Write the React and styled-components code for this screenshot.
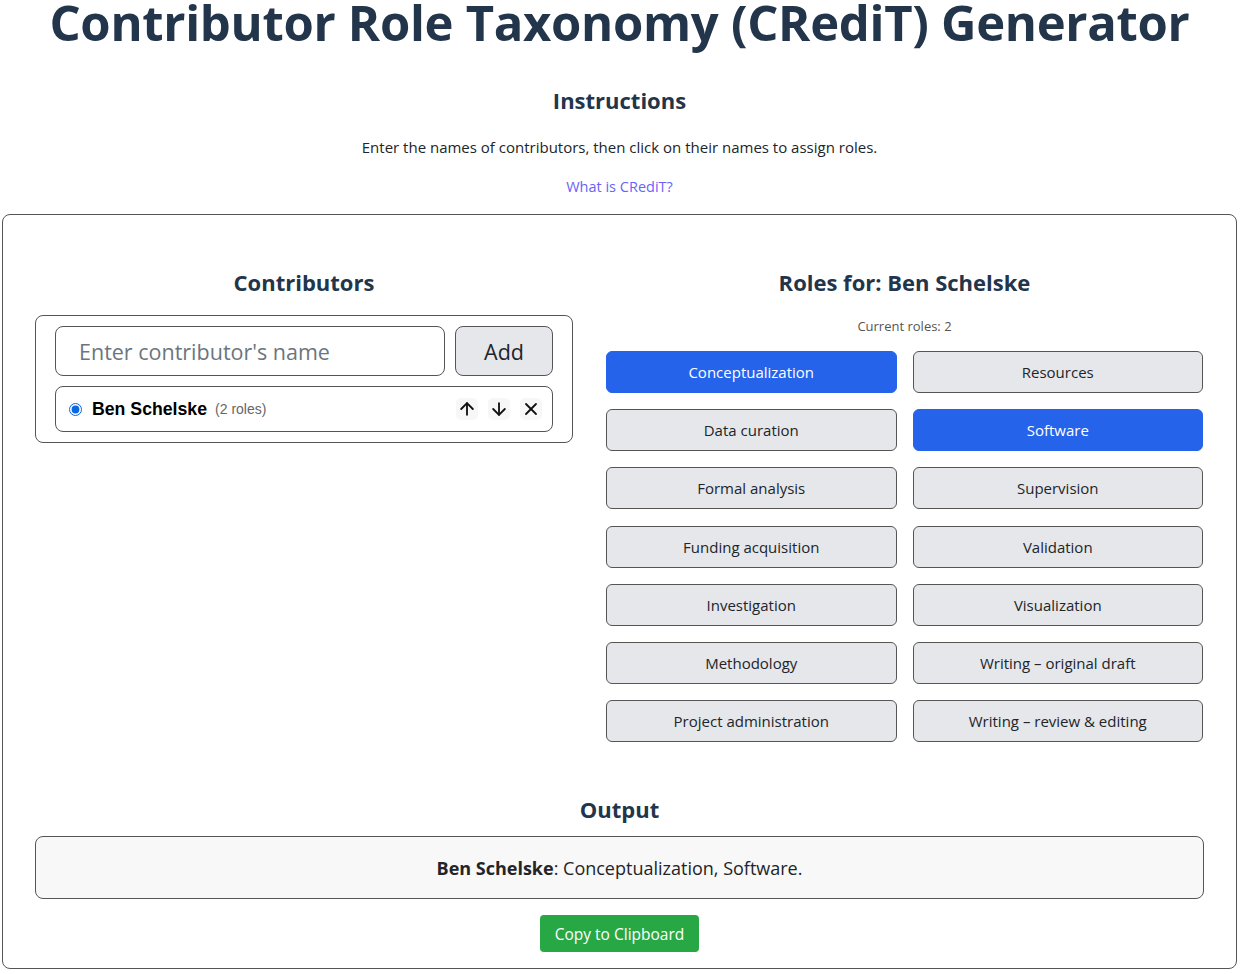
import React, { useState } from "react"
import styled, { createGlobalStyle } from "styled-components"
import { ArrowUp, ArrowDown, X } from "lucide-react"

const GlobalStyle = createGlobalStyle`
  body {
    margin: 0;
    font-family: "Open Sans", "Noto Sans", sans-serif;
    color: #212529;
    background: #fff;
  }
`

const Page = styled.div`
  margin: 0 3px 0 2px;
  text-align: center;
`

const Title = styled.h1`
  margin: 0;
  font-size: 49px;
  line-height: 44px;
  font-weight: 700;
  color: #22354a;
  letter-spacing: -0.3px;
  white-space: nowrap;
`

const SectionHeading = styled.h2`
  margin: 0;
  font-size: 22px;
  line-height: 30px;
  font-weight: 700;
  color: #22354a;
`

const Instructions = styled.section`
  padding-top: 41px;
  display: flex;
  flex-direction: column;
  align-items: center;
`

const Lead = styled.p`
  margin: 21px 0 0;
  font-size: 15px;
  line-height: 22px;
  color: #212529;
`

const InfoLink = styled.a`
  margin-top: 18px;
  font-size: 14.5px;
  line-height: 22px;
  color: #6a63f6;
  text-decoration: none;
`

const Card = styled.main`
  margin-top: 16px;
  border: 1px solid #555;
  border-radius: 8px;
  padding: 52px 32px 16px;
`

const Columns = styled.div`
  display: grid;
  grid-template-columns: 538px 597px;
  gap: 33px;
  align-items: start;
`

const Column = styled.div`
  display: flex;
  flex-direction: column;
  align-items: stretch;
`

const ContributorBox = styled.div`
  margin-top: 18px;
  border: 1px solid #555;
  border-radius: 8px;
  padding: 10px 19px 10px;
  display: flex;
  flex-direction: column;
  gap: 10px;
`

const InputRow = styled.div`
  display: flex;
  gap: 10px;
`

const NameInput = styled.input`
  flex: 1;
  height: 50px;
  box-sizing: border-box;
  border: 1px solid #555;
  border-radius: 8px;
  padding: 0 23px;
  font-family: inherit;
  font-size: 21.5px;
  color: #212529;
  &::placeholder {
    color: #6c757d;
  }
`

const AddButton = styled.button`
  width: 98px;
  height: 50px;
  border: 1px solid #555;
  border-radius: 8px;
  background: #e5e7eb;
  font-family: inherit;
  font-size: 21.5px;
  color: #212529;
`

const ContributorRow = styled.div`
  height: 46px;
  box-sizing: border-box;
  border: 1px solid #555;
  border-radius: 8px;
  display: flex;
  align-items: center;
  padding: 0 10px 0 12px;
`

const Radio = styled.input`
  margin: 0 10px 0 1px;
  width: 13px;
  height: 13px;
  accent-color: #0b66e4;
`

const Name = styled.span`
  font-family: "Liberation Sans", Arial, sans-serif;
  font-weight: 700;
  font-size: 17.7px;
  color: #000;
`

const RoleCount = styled.span`
  margin-left: 8px;
  font-family: "Liberation Sans", Arial, sans-serif;
  font-size: 14px;
  color: #666;
`

const RowActions = styled.div`
  margin-left: auto;
  display: flex;
  gap: 10px;
`

const IconButton = styled.button`
  width: 22px;
  height: 22px;
  padding: 0;
  border: none;
  border-radius: 5px;
  background: #f7f7f7;
  color: #111;
  display: flex;
  align-items: center;
  justify-content: center;
`

const CurrentRoles = styled.p`
  margin: 20px 0 0;
  font-size: 13px;
  line-height: 18px;
  color: #555;
`

const RoleGrid = styled.div`
  margin-top: 16px;
  display: grid;
  grid-template-columns: 1fr 1fr;
  column-gap: 16px;
  row-gap: 16.2px;
`

const RoleButton = styled.button`
  height: 42px;
  border-radius: 6px;
  border: 1px solid ${p => (p.$active ? "#2563eb" : "#555")};
  background: ${p => (p.$active ? "#2563eb" : "#e5e7eb")};
  color: ${p => (p.$active ? "#fff" : "#212529")};
  font-family: inherit;
  font-size: 15px;
  cursor: pointer;
`

const OutputSection = styled.section`
  margin-top: 52px;
  display: flex;
  flex-direction: column;
  align-items: center;
`

const OutputBox = styled.div`
  align-self: stretch;
  margin-top: 12px;
  height: 63px;
  box-sizing: border-box;
  border: 1px solid #555;
  border-radius: 8px;
  background: #f8f8f8;
  display: flex;
  align-items: center;
  justify-content: center;
  font-size: 18px;
  color: #212529;
`

const CopyButton = styled.button`
  margin-top: 16px;
  height: 37px;
  padding: 0 15px;
  border: none;
  border-radius: 4px;
  background: #28a745;
  color: #fff;
  font-family: inherit;
  font-size: 15.5px;
`

const ROLES = [
  "Conceptualization",
  "Resources",
  "Data curation",
  "Software",
  "Formal analysis",
  "Supervision",
  "Funding acquisition",
  "Validation",
  "Investigation",
  "Visualization",
  "Methodology",
  "Writing – original draft",
  "Project administration",
  "Writing – review & editing",
]

const App = () => {
  const [selected, setSelected] = useState(["Conceptualization", "Software"])
  const toggle = role =>
    setSelected(s => (s.includes(role) ? s.filter(r => r !== role) : [...s, role]))
  const ordered = ROLES.filter(r => selected.includes(r))

  return (
    <>
      <GlobalStyle />
      <Page>
        <Title>Contributor Role Taxonomy (CRediT) Generator</Title>
        <Instructions>
          <SectionHeading>Instructions</SectionHeading>
          <Lead>Enter the names of contributors, then click on their names to assign roles.</Lead>
          <InfoLink href="#">What is CRediT?</InfoLink>
        </Instructions>
        <Card>
          <Columns>
            <Column>
              <SectionHeading>Contributors</SectionHeading>
              <ContributorBox>
                <InputRow>
                  <NameInput placeholder="Enter contributor's name" />
                  <AddButton>Add</AddButton>
                </InputRow>
                <ContributorRow>
                  <Radio type="radio" checked readOnly />
                  <Name>Ben Schelske</Name>
                  <RoleCount>({selected.length} roles)</RoleCount>
                  <RowActions>
                    <IconButton aria-label="Move up"><ArrowUp size={20} strokeWidth={2.2} /></IconButton>
                    <IconButton aria-label="Move down"><ArrowDown size={20} strokeWidth={2.2} /></IconButton>
                    <IconButton aria-label="Remove"><X size={20} strokeWidth={2.2} /></IconButton>
                  </RowActions>
                </ContributorRow>
              </ContributorBox>
            </Column>
            <Column>
              <SectionHeading>Roles for: Ben Schelske</SectionHeading>
              <CurrentRoles>Current roles: {selected.length}</CurrentRoles>
              <RoleGrid>
                {ROLES.map(role => (
                  <RoleButton key={role} $active={selected.includes(role)} onClick={() => toggle(role)}>
                    {role}
                  </RoleButton>
                ))}
              </RoleGrid>
            </Column>
          </Columns>
          <OutputSection>
            <SectionHeading>Output</SectionHeading>
            <OutputBox>
              <span>
                <b>Ben Schelske</b>: {ordered.join(", ")}.
              </span>
            </OutputBox>
            <CopyButton>Copy to Clipboard</CopyButton>
          </OutputSection>
        </Card>
      </Page>
    </>
  )
}

export default App
